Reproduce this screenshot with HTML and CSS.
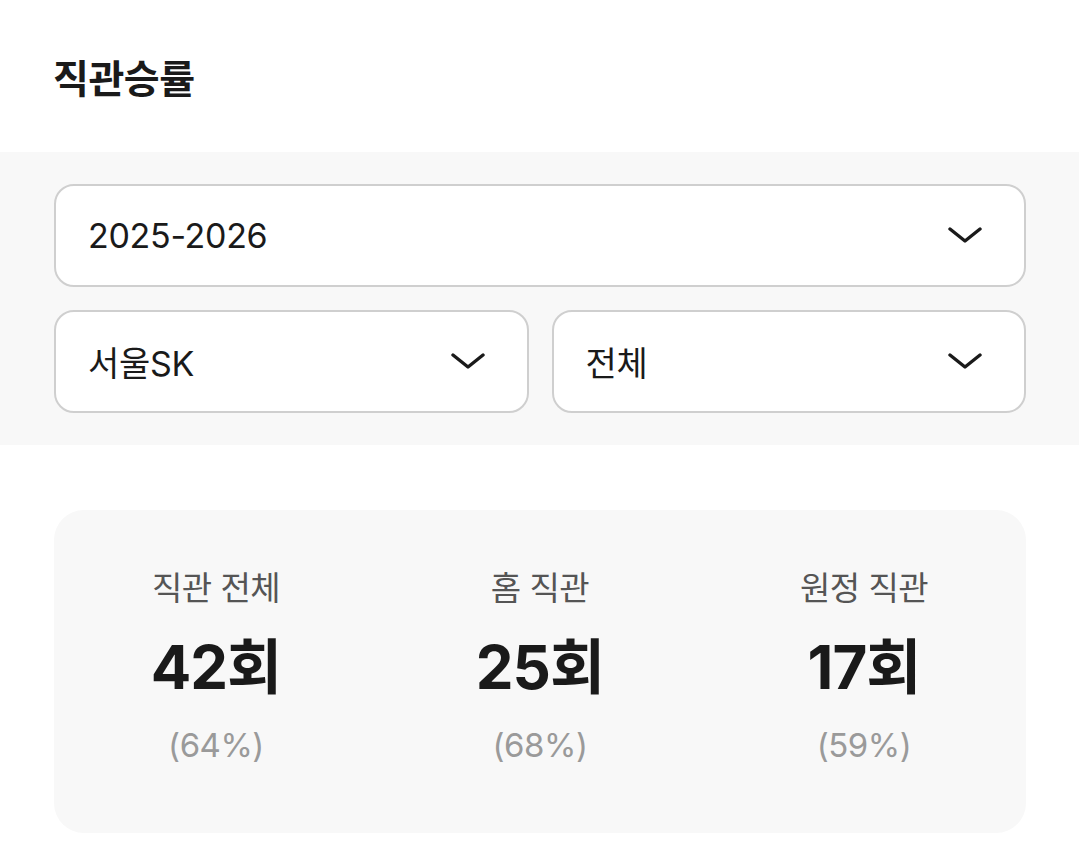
FILE: index.html
```html
<!DOCTYPE html>
<html lang="ko">
<head>
<meta charset="utf-8">
<link rel="stylesheet" href="styles.css">
</head>
<body>
<header class="header">
  <h1 class="title">직관승률</h1>
</header>
<section class="filters">
  <div class="select">
    <span class="select-text">2025-2026</span>
    <svg class="chev" viewBox="0 0 34 16" width="34" height="16"><path d="M2 2 L17 14 L32 2" fill="none" stroke="#1a1a1a" stroke-width="3.4" stroke-linecap="round" stroke-linejoin="round"/></svg>
  </div>
  <div class="row">
    <div class="select">
      <span class="select-text">서울SK</span>
      <svg class="chev" viewBox="0 0 34 16" width="34" height="16"><path d="M2 2 L17 14 L32 2" fill="none" stroke="#1a1a1a" stroke-width="3.4" stroke-linecap="round" stroke-linejoin="round"/></svg>
    </div>
    <div class="select">
      <span class="select-text">전체</span>
      <svg class="chev" viewBox="0 0 34 16" width="34" height="16"><path d="M2 2 L17 14 L32 2" fill="none" stroke="#1a1a1a" stroke-width="3.4" stroke-linecap="round" stroke-linejoin="round"/></svg>
    </div>
  </div>
</section>
<section class="stats-wrap">
  <div class="stats">
    <div class="stat">
      <div class="stat-label">직관 전체</div>
      <div class="stat-value">42회</div>
      <div class="stat-pct">(64%)</div>
    </div>
    <div class="stat">
      <div class="stat-label">홈 직관</div>
      <div class="stat-value">25회</div>
      <div class="stat-pct">(68%)</div>
    </div>
    <div class="stat">
      <div class="stat-label">원정 직관</div>
      <div class="stat-value">17회</div>
      <div class="stat-pct">(59%)</div>
    </div>
  </div>
</section>
</body>
</html>
```
FILE: styles.css
```css
* { box-sizing: border-box; }
html, body { margin: 0; padding: 0; background: #ffffff; }
body {
  font-family: "Inter", "Noto Sans CJK KR", sans-serif;
  color: #1a1a1a;
  width: 1079px;
}
.header {
  height: 152px;
  display: flex;
  align-items: center;
  padding-left: 53px;
  padding-top: 4px;
}
.title {
  margin: 0;
  font-size: 39px;
  font-weight: 700;
  letter-spacing: -0.5px;
  color: #1a1a1a;
  line-height: 1;
}
.filters {
  background: #f8f8f8;
  padding: 32px 53px 32px 54px;
  display: flex;
  flex-direction: column;
  gap: 23px;
}
.row {
  display: grid;
  grid-template-columns: 1fr 1fr;
  gap: 23px;
}
.select {
  height: 103px;
  background: #ffffff;
  border: 2px solid #cfcfcf;
  border-radius: 20px;
  display: flex;
  align-items: center;
  justify-content: space-between;
  padding: 0 42px 0 32px;
}
.select-text {
  font-size: 34px;
  font-weight: 400;
  color: #1a1a1a;
  letter-spacing: -0.3px;
}
.chev { display: block; margin-top: -2px; }
.stats-wrap {
  padding: 65px 53px 0 54px;
}
.stats {
  background: #f8f8f8;
  border-radius: 30px;
  height: 323px;
  display: grid;
  grid-template-columns: 1fr 1fr 1fr;
  align-content: start;
  padding-top: 56px;
}
.stat {
  display: flex;
  flex-direction: column;
  align-items: center;
}
.stat-label {
  font-size: 33px;
  color: #555555;
  line-height: 44px;
  letter-spacing: -0.5px;
}
.stat-value {
  font-size: 60px;
  font-weight: 700;
  color: #1a1a1a;
  line-height: 72px;
  margin-top: 21px;
  letter-spacing: -1px;
}
.stat-pct {
  font-size: 33px;
  color: #9a9a9a;
  line-height: 44px;
  margin-top: 20px;
  letter-spacing: -0.5px;
}
```
